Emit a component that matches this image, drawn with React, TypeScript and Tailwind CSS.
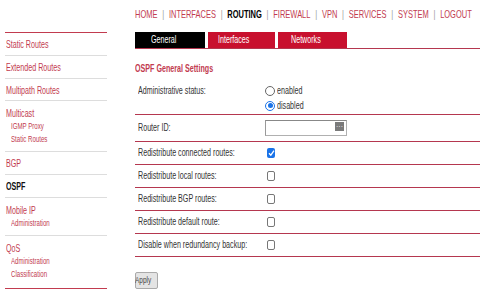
import React from "react";

const NAV = ["HOME", "INTERFACES", "ROUTING", "FIREWALL", "VPN", "SERVICES", "SYSTEM", "LOGOUT"];

type SideItem = { label: string; h: string; active?: boolean; subs?: string[] };

const SIDE: SideItem[] = [
  { label: "Static Routes", h: "h-[23px]" },
  { label: "Extended Routes", h: "h-[23px]" },
  { label: "Multipath Routes", h: "h-[22px]" },
  { label: "Multicast", h: "h-[51px]", subs: ["IGMP Proxy", "Static Routes"] },
  { label: "BGP", h: "h-[23px]" },
  { label: "OSPF", h: "h-[23px]", active: true },
  { label: "Mobile IP", h: "h-[38px]", subs: ["Administration"] },
  { label: "QoS", h: "h-[51px]", subs: ["Administration", "Classification"] },
];

const CHECKS = [
  { label: "Redistribute connected routes:", checked: true },
  { label: "Redistribute local routes:", checked: false },
  { label: "Redistribute BGP routes:", checked: false },
  { label: "Redistribute default route:", checked: false },
  { label: "Disable when redundancy backup:", checked: false },
];

// the page font is a very narrow sans; squeeze regular text horizontally
function Sq({ children, className = "" }: { children: React.ReactNode; className?: string }) {
  return <span className={"inline-block whitespace-nowrap origin-left scale-x-[0.68] " + className}>{children}</span>;
}

function Radio({ on, label }: { on: boolean; label: string }) {
  return (
    <div className="flex items-center gap-[2px] h-[15px]">
      <span
        className={
          on
            ? "w-[10px] h-[10px] rounded-full border-[1.5px] border-[#1a73e8] flex items-center justify-center bg-white"
            : "w-[10px] h-[10px] rounded-full border border-[#666] bg-white"
        }
      >
        {on && <span className="w-[5px] h-[5px] rounded-full bg-[#1a73e8]" />}
      </span>
      <Sq className="text-[10.5px] text-[#333]">{label}</Sq>
    </div>
  );
}

function Check({ on }: { on: boolean }) {
  if (on)
    return (
      <span className="w-[8px] h-[10px] rounded-[2px] bg-[#1a73e8] flex items-center justify-center">
        <svg width="7" height="8" viewBox="0 0 7 8">
          <path d="M1 4.3 L2.8 6.2 L6 1.6" fill="none" stroke="white" strokeWidth="1.3" />
        </svg>
      </span>
    );
  return <span className="w-[8px] h-[10px] rounded-[2px] border border-[#777] bg-white" />;
}

export default function App() {
  return (
    <div
      className="w-[480px] h-[300px] bg-white overflow-hidden text-[#333]"
      style={{ fontFamily: '"Liberation Sans", Arial, sans-serif' }}
    >
      {/* top menu */}
      <div className="h-[32px] pl-[135px] pt-[8px]">
        <div className="flex items-center text-[11px] leading-[13px] whitespace-nowrap origin-left scale-x-[0.68]">
          {NAV.map((n, i) => (
            <React.Fragment key={n}>
              {i > 0 && <span className="mx-[7px] text-[#999]">|</span>}
              <span className={n === "ROUTING" ? "font-bold text-black" : "text-[#c23b4f]"}>{n}</span>
            </React.Fragment>
          ))}
        </div>
      </div>

      <div className="flex">
        {/* sidebar */}
        <div className="ml-[5px] w-[102px] border-t border-b border-[#c23b4f] flex flex-col">
          {SIDE.map((s, i) => (
            <div
              key={i}
              className={
                s.h +
                (i < SIDE.length - 1 ? " border-b border-[#ddd]" : "") +
                " pl-[1px] flex flex-col " +
                (s.subs ? "pt-[5px]" : "justify-center")
              }
            >
              <div className="h-[14px] text-[10.5px] leading-[14px]">
                <Sq className={s.active ? "text-[#111] font-bold" : "text-[#c23b4f]"}>{s.label}</Sq>
              </div>
              {s.subs?.map((t) => (
                <div key={t} className="pl-[5px] h-[13px] text-[9px] leading-[13px]">
                  <Sq className="text-[#c23b4f]">{t}</Sq>
                </div>
              ))}
            </div>
          ))}
        </div>

        {/* main */}
        <div className="ml-[28px] flex-1 flex flex-col">
          <div className="flex gap-[3px] border-b border-[#b5374f] h-[17px]">
            <div className="w-[70px] bg-black text-white text-[10.5px] flex items-center justify-center">
              <Sq className="origin-center">General</Sq>
            </div>
            <div className="w-[67px] bg-[#c8102e] text-white text-[10.5px] flex items-center justify-center">
              <Sq className="origin-center">Interfaces</Sq>
            </div>
            <div className="w-[69px] bg-[#c8102e] text-white text-[10.5px] flex items-center justify-center">
              <Sq className="origin-center">Networks</Sq>
            </div>
          </div>

          <div className="mt-[11px] h-[13px] leading-[13px]">
            <Sq className="text-[10.5px] font-bold text-[#c23b4f]">OSPF General Settings</Sq>
          </div>

          <div className="mt-[10px] flex border-b border-[#b5374f] pb-[1px]">
            <div className="w-[130px] pl-[3px] text-[10.5px] leading-[15px]">
              <Sq>Administrative status:</Sq>
            </div>
            <div className="flex flex-col">
              <Radio on={false} label="enabled" />
              <Radio on={true} label="disabled" />
            </div>
          </div>

          <div className="flex items-center h-[27px] border-b border-[#b5374f]">
            <div className="w-[130px] pl-[3px] text-[10.5px]">
              <Sq>Router ID:</Sq>
            </div>
            <div className="w-[82px] h-[16px] border border-[#b0b0b0] border-t-[#888] border-l-[#999] bg-white flex justify-end items-start p-[1px] pr-[2px]">
              <span className="w-[9px] h-[9px] bg-[#7a7a7a] flex items-center justify-center text-white text-[7px] leading-none">
                ···
              </span>
            </div>
          </div>

          {CHECKS.map((c) => (
            <div key={c.label} className="flex items-center h-[23px] border-b border-[#b5374f]">
              <div className="w-[132px] pl-[3px] text-[10.5px]">
                <Sq>{c.label}</Sq>
              </div>
              <Check on={c.checked} />
            </div>
          ))}

          <div className="mt-[15px] flex">
            <button className="w-[23px] h-[17px] border border-[#aaa] rounded-[2px] bg-[#e4e4e4] text-[9.5px] text-[#444] flex items-center justify-center overflow-visible">
              <Sq className="origin-center">Apply</Sq>
            </button>
          </div>
        </div>
      </div>
    </div>
  );
}
